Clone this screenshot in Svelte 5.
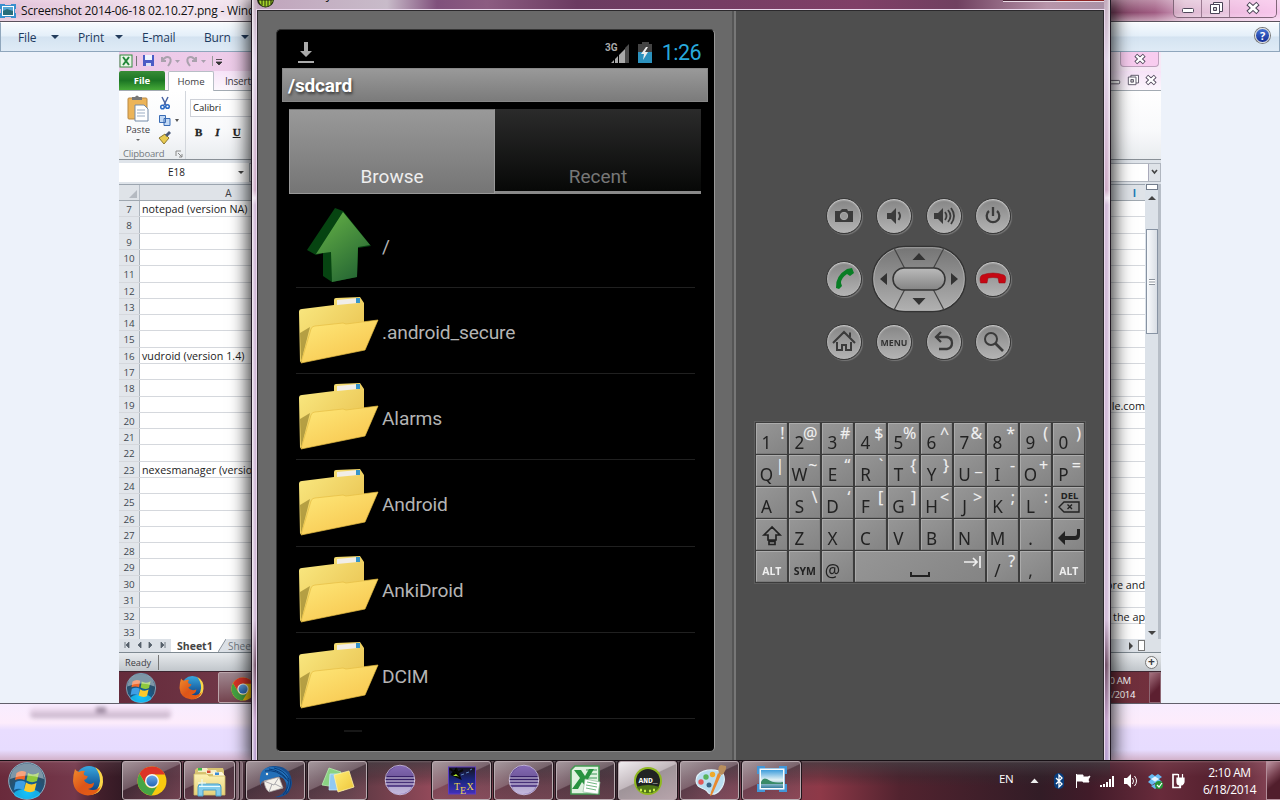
<script>
  const sheetRows = Array.from({ length: 27 }, (_, i) => i + 7);
  const cellText = { 7: 'notepad (version NA)', 16: 'vudroid (version 1.4)', 23: 'nexesmanager (version 2.1)' };
  const farText = { 19: 'le.com', 30: 'ore and', 32: 'the ap' };
  const folders = ['.android_secure', 'Alarms', 'Android', 'AnkiDroid', 'DCIM'];
  const keyRows = [
    ['1!', '2@', '3#', '4$', '5%', '6^', '7&', '8*', '9(', '0)'],
    ['Q|', 'W~', 'E“', 'R`', 'T{', 'Y}', 'U_', 'I-', 'O+', 'P='],
    ['A', 'S\\', 'D‘', 'F[', 'G]', 'H<', 'J>', 'K;', 'L:', 'DEL'],
    ['SHIFT', 'Z', 'X', 'C', 'V', 'B', 'N', 'M', '.', 'ENTER'],
    ['ALT', 'SYM', '@', 'SPACE', '/?', ',', 'ALT']
  ];
  const pad = ['camera', 'voldown', 'volup', 'power', 'call', 'dpad', 'end', 'home', 'menu', 'back', 'search'];
  const tasks = ['thunderbird', 'sticky', 'eclipse0', 'tex', 'eclipse', 'excel', 'and', 'paint', 'photo'];
</script>

{#snippet orb()}
  <circle cx="20" cy="20" r="18.3" fill="url(#orbg)" stroke="#8fb3c6" stroke-width="1" />
  <ellipse cx="20" cy="33" rx="13" ry="5" fill="#18c8ff" opacity=".75" />
  <path d="M9.500 12Q14 8.500 19 11L17.500 19Q13 17 8 19Z" fill="#f0682a" />
  <path d="M21 12Q26 15 32 11.500L30 20Q25 22.500 19.500 19.500Z" fill="#8fc93c" />
  <path d="M7.500 21Q13 18.500 17.500 21L15.500 29Q11 26.500 6 29Z" fill="#3f9fe6" transform="translate(1 0)" />
  <path d="M19 21.500Q24 25 29.500 22L27.500 30Q23 32.500 17 29.500Z" fill="#fcc92c" />
  <path d="M3 18C4 7 12 2.500 20 2.500S36 7 37 18Q20 11 3 18Z" fill="#fff" opacity=".4" />
{/snippet}

{#snippet firefox()}
  <circle cx="21" cy="18" r="13" fill="url(#ffb)" />
  <path d="M27 6Q36 11 35 21Q34 33 22 34Q31 30 32 20Q32 12 27 6Z" fill="#fbd648" />
  <path d="M7 8Q8 10 11 11Q14 9 17 10Q15 12 16 14L20 15.500Q19 18 16 19Q17 21.500 19 22Q23 24 26 21.500Q26 27 20 28Q28 31 33 25Q30 34 20 34.500Q6 33 5 20Q5 14 7 8Z" fill="url(#ffo)" />
{/snippet}

{#snippet chrome()}
  <circle cx="20" cy="20" r="14.500" fill="#f8c910" />
  <path d="M7.500 12.700A14.500 14.500 0 0 1 33 13.500H20A7 7 0 0 0 14 23.500Z" fill="#dc3427" />
  <path d="M7.500 12.700A14.500 14.500 0 0 0 19.500 34.500L26.200 23.500A7 7 0 0 1 13.800 23.500Z" fill="#46a544" />
  <circle cx="20" cy="20" r="7" fill="#f4f5f0" /><circle cx="20" cy="20" r="5.600" fill="url(#chb)" />
{/snippet}

{#snippet icon(n)}
  <svg class="ticon" width="40" height="40" viewBox="0 0 40 40">
    {#if n === 'orb'}{@render orb()}
    {:else if n === 'firefox'}{@render firefox()}
    {:else if n === 'chrome'}{@render chrome()}
    {:else if n === 'explorer'}
      <path d="M5 9L7 7H33L34 10V34H5Z" fill="#d8c473" />
      <path d="M8 7h9l2 4H8z" fill="#f5eec8" /><rect x="8" y="7" width="4" height="2.500" fill="#3fb84a" />
      <path d="M16 9h10l2 4H16z" fill="#f5eec8" /><rect x="17" y="9.500" width="3.500" height="2.500" fill="#d44b30" />
      <path d="M23 11h9l3 4H23z" fill="#fff8dd" /><rect x="25" y="11.500" width="4" height="2.500" fill="#3a8cd8" />
      <path d="M4 13H17L19 15H35V34H4Z" fill="url(#exf)" stroke="#d2bc68" stroke-width=".8" />
      <path d="M8 35V26Q8 23 11 23H28Q31 23 31 26V35H26V29H13V35Z" fill="#83cdec" stroke="#4c9fc8" stroke-width="1" />
      <path d="M9 25.500H30M12 18v8M8 22h8" stroke="#e8fbff" stroke-width="1" />
    {:else if n === 'thunderbird'}
      <path d="M5 14Q9 5 17 5Q27 4 33 11Q39 22 33 31Q28 37 19 36Q28 34 30 27Q31 21 27 17Z" fill="#164f93" />
      <path d="M4 16Q5 7 14 6Q25 5 32 14Q36 22 31 32Q33 20 24 15L7 20Q3 22 6 27Q3 23 4 16Z" fill="#2470b8" />
      <path d="M9 10Q21 8 30 18M13 8Q25 9 32 20M18 7Q28 9 33 18M32 17Q34 26 27 34M34 18Q36 26 30 33" stroke="#093b78" fill="none" stroke-width="1" />
      <path d="M8 20L23 16L27 27L13 31Q9 28 8 20Z" fill="#f4f1ea" stroke="#a9a6a7" stroke-width=".7" />
      <path d="M8 20L18 24L23 16M13 31L16 23M27 27L19 23" stroke="#96949b" fill="none" stroke-width=".8" />
      <circle cx="11" cy="13" r="1.200" fill="#f0ede0" />
    {:else if n === 'sticky'}
      <path d="M11 7L23 11L18 26L4 24Z" fill="#8bd283" stroke="#b7edb0" stroke-width=".8" />
      <path d="M12 13H26V29H11Z" fill="#91c9f1" stroke="#c2e4fb" stroke-width=".8" />
      <path d="M16 14L31 10L36 26L20 31Z" fill="url(#note)" stroke="#fff1a5" stroke-width=".8" />
    {:else if n === 'eclipse' || n === 'eclipse0'}
      <circle cx="20" cy="19" r="14.800" fill="url(#ecl)" stroke="#d5cbe6" stroke-width=".8" />
      <path d="M7 13Q14 3 25 5Q31 8 34 15H7Z" fill="#ac92d2" opacity=".5" />
      <path d="M5.500 17H34.500M5 20H35M5.500 23H34.500" stroke="#ece4f7" stroke-width="1.200" />
      <path d="M8 26Q11 33 19 33Q28 33 32 26Z" fill="#e5dff3" opacity=".65" />
    {:else if n === 'tex'}
      <rect x="6.500" y="6" width="27" height="27" fill="url(#tex)" stroke="#5b3bc4" stroke-width="1" />
      <path d="M9 13L18 17L14 7M15 12L21 9M8 8L14 12" stroke="#090909" stroke-width="2" />
      <path d="M11 15l3-2 3 3-2-1z" fill="#b4f12b" /><path d="M24 12l3-1M28 9l2-1M19 14l3-1" stroke="#5c86c0" stroke-width="1" />
      <text x="12" y="29" class="textex">T</text><text x="18" y="32.500" class="textex">E</text><text x="24.500" y="29" class="textex">X</text>
    {:else if n === 'excel'}
      <path d="M9 5H33V33H5V9Z" fill="#dff2e0" stroke="#439a52" stroke-width="1.600" />
      <path d="M20 9h11M22 13h9M22 17h9" stroke="#8dc49b" stroke-width="2" />
      <path d="M8 9H15L19 15L23 8H28L22 18L27 26H20L16 21L12 28H6L14 17Z" fill="#289340" />
      <path d="M19 18L34 21L32 33L17 31Z" fill="#fff" stroke="#92bc9b" stroke-width=".7" /><path d="M21 21l10 2M20 24l11 2M20 27l10 2" stroke="#72b883" stroke-width="1" />
    {:else if n === 'and'}
      <circle cx="20" cy="20" r="14" fill="#8fb820" /><circle cx="20" cy="20" r="12" fill="#202323" />
      <path d="M8.500 26Q20 22 31.500 26Q28 32 20 32Q12 32 8.500 26Z" fill="#4f7616" />
      <path d="M12 29h2M16 30h2M21 30h2M25 29h2" stroke="#c8ef4a" stroke-width="2.500" />
      <text x="20" y="21.500" class="andtext">AND_</text>
    {:else if n === 'paint'}
      <path d="M6 20C6 10 19 7 29 10C37 13 35 23 30 29C25 35 19 34 17 30C13 26 7 28 6 20Z" fill="#b9ddf0" stroke="#e0f2fa" stroke-width="1.200" />
      <circle cx="11" cy="21" r="2.700" fill="#e2585a" /><circle cx="16" cy="16" r="2.700" fill="#58b55c" /><circle cx="22.500" cy="13.500" r="2.700" fill="#eea92b" /><circle cx="19" cy="24" r="2.500" fill="#3a6688" />
      <path d="M31 14L22 34L20 35L21 31L28 12Z" fill="#e88a30" /><path d="M29 13Q27 5 31 4L36 5Q37 9 32 14Z" fill="#b98e5d" />
    {:else if n === 'photo'}
      <path d="M5 5h8v2h14V5h8v8h-2v10h2v8h-8v-2H13v2H5v-8h2V13H5z" fill="#4296d8" />
      <rect x="7.500" y="7.500" width="25" height="21" fill="#f8fbfc" /><rect x="9" y="9" width="22" height="18" fill="url(#photo)" />
      <path d="M9 21Q11 16 15 18Q22 23 31 21V23H9Z" fill="#398a68" />
    {/if}
  </svg>
{/snippet}

{#snippet folder()}
  <svg width="84" height="72" viewBox="0 0 84 72">
    <path d="M3 15Q3 12 6 12L38 8V3Q38 1 40 1L64 0L68 6V38L4 65Z" fill="url(#fold1)" />
    <path d="M41 3L62 1V6L41 8Z" fill="#f1eee8" /><path d="M60 1h4v5h-4z" fill="#3695c9" />
    <path d="M4 36L14 30L5 65Z" fill="#9a8630" opacity=".7" />
    <path d="M5 66L15 32Q16 29 19 29L47 26L50 27L82 23L69 53Z" fill="url(#fold2)" stroke="#e5bd43" stroke-width=".7" />
  </svg>
{/snippet}

{#snippet wctl(kind)}
  <svg width="20" height="16" viewBox="0 0 20 16" class="wctl">
    {#if kind === 'min'}<rect x="4.500" y="8.500" width="11" height="4" rx="1" fill="#fff" stroke="#4f485a" />
    {:else if kind === 'max'}<path d="M7.500 2.500h9v9h-9z" fill="#fff" stroke="#4a4457" /><path d="M4.500 4.500h9v9h-9z" fill="#fff" stroke="#4a4457" /><path d="M7.500 7.500h3v3h-3z" fill="#ccc" stroke="#4a4457" />
    {:else}<path d="M5 3.500L10 8L15 3.500M5 12.500L10 8L15 12.500" stroke="#4b4356" stroke-width="4.800" fill="none" /><path d="M5.700 4L10 8L14.300 4M5.700 12L10 8L14.300 12" stroke="#fff" stroke-width="2.800" fill="none" />{/if}
  </svg>
{/snippet}

{#snippet padIcon(n)}
  <svg width="34" height="34" viewBox="0 0 34 34" fill="none" stroke="#3b3b3b" stroke-width="2">
    {#if n === 'camera'}<path d="M8 12h5l2-2h5l1 2h5v11H8z" fill="#3b3b3b" stroke="none" /><circle cx="17" cy="17" r="3.700" fill="#999" stroke="#aaa" stroke-width="1" />
    {:else if n === 'voldown'}<path d="M10 14h4l5-5v16l-5-5h-4z" fill="#3b3b3b" stroke="none" /><path d="M21.500 13Q24.500 17 21.500 21" />
    {:else if n === 'volup'}<path d="M7 14h4l5-5v16l-5-5H7z" fill="#3b3b3b" stroke="none" /><path d="M18 13Q21 17 18 21M21 11Q26 17 21 23M24 9Q30 17 24 25" stroke-width="1.800" />
    {:else if n === 'power'}<path d="M13 12A6.300 6.300 0 1 0 21 12M17 8V17" stroke-width="2.300" />
    {:else if n === 'call'}<path d="M9 26Q8 14 20 7L25 6L27 11L23 14L20 12Q14 16 14 21L15 24L12 27Z" fill="#087d25" stroke="none" />
    {:else if n === 'end'}<path d="M4.500 21Q3 15 6 13Q17 9 28 13Q31 15 29 21H23L22 16Q17 15 12 16L11 21Z" fill="#c50713" stroke="#970b10" stroke-width=".5" />
    {:else if n === 'home'}<path d="M6 18L17 7L28 18M10 17V25H15V20H19V25H24V17M23 12V7.500" />
    {:else if n === 'back'}<path d="M14 7L9 12L14 17M10 12H20Q25 13 25 18T20 24H12" stroke-width="2.300" />
    {:else if n === 'search'}<circle cx="15" cy="14" r="6" /><path d="M19 18L27 26" stroke-width="2.700" />{/if}
  </svg>
{/snippet}

<svg width="0" height="0" class="defs"><defs>
  <radialGradient id="orbg" cx=".5" cy=".8"><stop offset="0" stop-color="#0eb3f4" /><stop offset=".55" stop-color="#125b91" /><stop offset="1" stop-color="#29506d" /></radialGradient>
  <linearGradient id="ffb" x1="0" y1="0" x2="0" y2="1"><stop offset="0" stop-color="#38a8df" /><stop offset="1" stop-color="#093c83" /></linearGradient>
  <linearGradient id="ffo" x1="0" y1="0" x2="1" y2="1"><stop offset="0" stop-color="#ef8b2c" /><stop offset=".5" stop-color="#dd5519" /><stop offset="1" stop-color="#e86012" /></linearGradient>
  <linearGradient id="chb" x1="0" y1="0" x2="0" y2="1"><stop offset="0" stop-color="#6aa9e7" /><stop offset="1" stop-color="#2465b5" /></linearGradient>
  <linearGradient id="exf" x1="0" y1="0" x2="0" y2="1"><stop offset="0" stop-color="#fcf1b2" /><stop offset="1" stop-color="#e6d17b" /></linearGradient>
  <linearGradient id="note" x1="0" y1="0" x2="1" y2="1"><stop offset="0" stop-color="#ffed73" /><stop offset="1" stop-color="#eec53b" /></linearGradient>
  <linearGradient id="ecl" x1="0" y1="0" x2="0" y2="1"><stop offset="0" stop-color="#60449a" /><stop offset=".45" stop-color="#301a60" /><stop offset="1" stop-color="#8d77bf" /></linearGradient>
  <linearGradient id="tex" x1="0" y1="0" x2="0" y2="1"><stop offset="0" stop-color="#17131c" /><stop offset=".5" stop-color="#1a2780" /><stop offset="1" stop-color="#4231bc" /></linearGradient>
  <linearGradient id="photo" x1="0" y1="0" x2="0" y2="1"><stop offset="0" stop-color="#3e9ddc" /><stop offset=".55" stop-color="#e3f1f4" /><stop offset="1" stop-color="#347e9e" /></linearGradient>
  <linearGradient id="fold1" x1="0" y1="0" x2="1" y2="1"><stop offset="0" stop-color="#faea83" /><stop offset="1" stop-color="#e6bb47" /></linearGradient>
  <linearGradient id="fold2" x1="0" y1="0" x2=".8" y2="1"><stop offset="0" stop-color="#fee97b" /><stop offset="1" stop-color="#f7c54d" /></linearGradient>
  <linearGradient id="arrow" x1="0" y1="0" x2=".6" y2="1"><stop offset="0" stop-color="#68b447" /><stop offset="1" stop-color="#286a34" /></linearGradient>
  <linearGradient id="dpadg" x1="0" y1="0" x2="0" y2="1"><stop offset="0" stop-color="#747474" /><stop offset="1" stop-color="#b1b1b1" /></linearGradient>
  <linearGradient id="pillg" x1="0" y1="0" x2="0" y2="1"><stop offset="0" stop-color="#bbb" /><stop offset="1" stop-color="#848484" /></linearGradient>
</defs></svg>

<div class="desktop">
  <div class="behind"><div class="blurbar"><i></i></div></div>

  <section class="viewer">
    <header class="vtitle">
      <svg width="16" height="14" viewBox="0 0 16 14"><path d="M0 0h5v1h6V0h5v5h-1v4h1v5h-5v-1H5v1H0V9h1V5H0z" fill="#398fcd" /><path d="M2 2h12v10H2z" fill="#fff" /><path d="M3 3h10v8H3z" fill="#55a7d5" /><path d="M3 7l4-2 6 2v4H3z" fill="#296d7a" /></svg>
      <span>Screenshot 2014-06-18 02.10.27.png - Windows Photo Viewer</span>
      <div class="wbtns"><i>{@render wctl('min')}</i><i>{@render wctl('max')}</i><i class="x">{@render wctl('x')}</i></div>
    </header>
    <nav class="vmenu">
      <span class="m1">File<b></b></span><span class="m2">Print<b></b></span><span class="m3">E-mail</span><span class="m4">Burn<b></b></span><span class="help">?</span>
    </nav>
    <div class="vbody">
      <div class="excel">
        <div class="xtitle">
          <svg width="112" height="18" viewBox="0 0 112 18"><rect x="1" y="3" width="12" height="12" fill="#e9f5e7" stroke="#338b3e" /><path d="M4 5l6 8M10 5l-6 8" stroke="#22873a" stroke-width="2" /><path d="M17.500 4v10" stroke="#777" /><path d="M24 3h11v11H24z" fill="#4b5cc5" /><path d="M26 3h7v5h-7z" fill="#eef3ff" /><path d="M27 11h5v3h-5z" fill="#dce2f5" /><path d="M43 5v4h4M43 9q4-6 8-3q2 3-2 8" fill="none" stroke="#aaa1ad" stroke-width="2" /><path d="M56 8h5l-2.500 3z" fill="#a99fad" /><path d="M77 5v4h-4M77 9q-4-6-8-3q-2 3 2 8" fill="none" stroke="#aaa1ad" stroke-width="2" /><path d="M82 8h5l-2.500 3z" fill="#a99fad" /><path d="M93.500 4v10" stroke="#999" /><path d="M97 7.500h6M97 10h6l-3 3z" stroke="#333" fill="#333" stroke-width=".8" /></svg>
          <div class="xwin">{@render wctl('x')}</div>
        </div>
        <div class="xtabs"><b>File</b><span class="home">Home</span><span class="insert">Insert</span><span class="docbtns">{@render wctl('min')}{@render wctl('max')}{@render wctl('x')}</span></div>
        <div class="ribbon">
          <div class="clip">
            <div class="cliprow">
              <div class="paste"><svg width="24" height="28" viewBox="0 0 24 28"><rect x="2" y="3" width="19" height="21" rx="1" fill="#ecb459" stroke="#b98842" /><path d="M6 5V2h3q2-3 4 0h3v3z" fill="#777" /><path d="M9 10h9l4 4v12H9z" fill="#fff" stroke="#748ba8" /><path d="M11 15h8M11 18h8M11 21h8" stroke="#9badc4" /></svg><span>Paste</span><b></b></div>
              <svg width="24" height="54" viewBox="0 0 24 54"><path d="M5 2l4 8M11 2L7 10" stroke="#4964a4" stroke-width="1.500" /><circle cx="5.500" cy="12" r="1.800" fill="none" stroke="#2868c4" stroke-width="1.500" /><circle cx="10.500" cy="11.500" r="1.800" fill="none" stroke="#2868c4" stroke-width="1.500" /><path d="M2.500 20.500h6v7h-6zM7 23.500h6v7H7z" fill="#c2d9f5" stroke="#396bb4" /><path d="M18 24h4l-2 3z" fill="#555" /><path d="M2 43l6-4 4 4-5 6z" fill="#e9cb51" stroke="#8c7830" /><path d="M8 40l4-4 2 2-4 4z" fill="#4d5b79" /></svg>
            </div>
            <div class="clabel">Clipboard <svg width="8" height="8" viewBox="0 0 8 8"><path d="M1 6V1h5M3 3l4 4M7 4v3H4" fill="none" stroke="#888" /></svg></div>
          </div>
          <div class="fontg"><div class="fbox">Calibri</div><div class="biu"><b>B</b><i>I</i><u>U</u><em></em></div></div>
        </div>
        <div class="fbar"><span>E18</span><b></b><div class="finput"><i><svg width="7" height="6" viewBox="0 0 7 6"><path d="M1 1l2.500 3L6 1" fill="none" stroke="#444" stroke-width="1.600" /></svg></i></div></div>
        <div class="sheetwrap">
          <div class="sheet">
            <div class="colhead"><span class="corner"><i></i></span><span class="ca">A</span><span class="ci">I</span></div>
            {#each sheetRows as r}
              <div class="xrow"><span class="rn">{r}</span><span class="cell">{cellText[r] ?? ''}</span><span class="far">{farText[r] ?? ''}</span></div>
            {/each}
          </div>
          <div class="vscroll"><i class="split"></i><b class="up"></b><div class="thumb"><i></i></div><b class="down"></b></div>
        </div>
        <div class="stabs"><svg width="52" height="12" viewBox="0 0 52 12"><path d="M6 3v6M10 3v6L7 6zM22 3v6l-3-3zM30 3v6l3-3zM42 3v6l3-3zM46 3v6" stroke="#555f6a" fill="#555f6a" stroke-width=".8" /></svg><b>Sheet1</b><svg width="8" height="13" viewBox="0 0 8 13"><path d="M0 0h8L0 13z" fill="#fff" /><path d="M8 0L0 13" stroke="#8a929b" /></svg><span>Sheet2</span><div class="hend"><i></i><em></em></div></div>
        <div class="xstatus"><span>Ready</span><i>+</i></div>
        <div class="minibar">
          <svg width="34" height="32" viewBox="0 0 40 40">{@render orb()}</svg><svg width="33" height="32" viewBox="0 0 40 40" class="mff">{@render firefox()}</svg><div class="mchrome"><svg width="32" height="32" viewBox="0 0 40 40">{@render chrome()}</svg></div>
          <div class="mclock"><span>2:10 AM</span><span>6/18/2014</span></div><i class="mshow"></i>
        </div>
      </div>
    </div>
  </section>

  <section class="emu">
    <header class="etitle"><svg width="18" height="10" viewBox="0 5.500 18 10"><circle cx="8.500" cy="4.500" r="8.500" fill="#1c280b" /><path d="M2 6h14Q14 12 8.500 12T2 6z" fill="#a5d329" /><path d="M5 5v6M8 5v7M11 5v7M14 5v5" stroke="#1d290c" /></svg><span>5554:my</span><i class="ectl"></i></header>
    <div class="client">
      <div class="left">
        <div class="phone">
          <div class="pstatus">
            <svg class="dl" width="16" height="22" viewBox="0 0 16 22"><path d="M6 0h4v9h4l-6 6-6-6h4zM0 19h16v2H0z" fill="#aaa" /></svg>
            <svg width="50" height="24" viewBox="0 0 50 24"><text x="0" y="10" class="g3">3G</text><path d="M6 22L9 19V22zM10 18l3-3v7h-3zM14 14l3-3v11h-3zM16 12l4-4v14h-4z" fill="#aaa" /><path d="M20 7l4-4v19h-4z" fill="#4c4c4c" /><path d="M33 3h4V1h7v2h3v19H33z" fill="#444" /><path d="M33 11h14v11H33z" fill="#2c91bd" /><path d="M41 6l-5 7h3l-1 6 5-8h-3l3-5z" fill="#eee" /></svg>
            <time>1:26</time>
          </div>
          <div class="path">/sdcard</div>
          <div class="tabs"><div class="tab on">Browse</div><div class="tab">Recent</div></div>
          <div class="list">
            <div class="item"><svg class="uparrow" width="82" height="80" viewBox="0 0 82 80"><path d="M37 3L45 6L73 41L60 43L59 72L34 77L25 71V48L18 50L9 45Z" fill="#064411" /><path d="M45 7L72 40L60 42L59 72L34 77L33 47L18 49Z" fill="url(#arrow)" /></svg><span>/</span></div>
            {#each folders as f}<div class="item">{@render folder()}<span>{f}</span></div>{/each}
            <div class="peek"></div>
          </div>
        </div>
      </div>
      <div class="right">
        <div class="pad">
          {#each pad as p}
            {#if p === 'dpad'}
              <svg class="dpad" width="96" height="68" viewBox="0 0 96 68"><rect x="1.500" y="1.500" width="93" height="65" rx="32.500" fill="url(#dpadg)" stroke="#333" stroke-width="1.500" /><rect x="2.700" y="2.700" width="90.600" height="62.600" rx="31" fill="none" stroke="#bbb" stroke-width=".7" /><path d="M23 3L34 24M73 3L62 24M23 65L34 44M73 65L62 44" stroke="#444" stroke-width="1.200" /><rect x="22" y="23" width="52" height="22" rx="11" fill="url(#pillg)" stroke="#343434" stroke-width="1.500" /><path d="M41.500 15L48 8l6.500 7zM41.500 53l6.500 7 6.500-7zM16 28v12l-7-6zM80 28v12l7-6z" fill="#333" /></svg>
            {:else}
              <div class="rb">{#if p === 'menu'}<span>MENU</span>{:else}{@render padIcon(p)}{/if}</div>
            {/if}
          {/each}
        </div>
        <div class="keys">
          {#each keyRows.flat() as k}
            <div class="key" class:space={k === 'SPACE'}>
              {#if k === 'ALT'}<span class="alt">ALT</span>
              {:else if k === 'SYM'}<span class="alt sym">SYM</span>
              {:else if k === 'DEL'}<svg width="32" height="31" viewBox="0 0 32 31"><text x="16.500" y="12" class="del">DEL</text><path d="M11 15h15v10H11l-5-5zM14.500 17.500l4.500 4.500M19 17.500l-4.500 4.500" fill="none" stroke="#222" stroke-width="1.400" /></svg>
              {:else if k === 'SHIFT'}<svg width="32" height="31" viewBox="0 0 32 31"><path d="M16 8l-8 8h4v5h8v-5h4zM13 22.500h6v3h-6z" fill="none" stroke="#222" stroke-width="1.700" /></svg>
              {:else if k === 'ENTER'}<svg width="32" height="31" viewBox="0 0 32 31"><path d="M5 19l7-7v5h10q2 0 2-3v-4h3v6q0 5-5 5H12v5z" fill="#222" /></svg>
              {:else if k === 'SPACE'}<svg width="131" height="31" viewBox="0 0 131 31"><path d="M56 21v4h18v-4" fill="none" stroke="#222" stroke-width="2" /><path d="M109 11h13M118 7l4 4-4 4M125 5v12" fill="none" stroke="#eee" stroke-width="1.700" /></svg>
              {:else}<span class="main">{k[0]}</span>{#if k[1]}<span class="sup">{k[1]}</span>{/if}{/if}
            </div>
          {/each}
        </div>
      </div>
    </div>
  </section>

  <footer class="taskbar">
    <div class="t free orb">{@render icon('orb')}</div>
    <div class="t free ff">{@render icon('firefox')}</div>
    <div class="t">{@render icon('chrome')}</div>
    <div class="t expl">{@render icon('explorer')}</div><i class="stack"></i><i class="stack s2"></i>
    {#each tasks as n}<div class="t" class:free={n === 'eclipse0'} class:active={n === 'and'}>{@render icon(n)}</div>{/each}
    <div class="tray">
      <span class="en">EN</span>
      <svg width="160" height="24" viewBox="1028 0 160 24"><path d="M1030.500 14h8l-4-4.500z" fill="#eee" /><rect x="1054" y="4" width="10" height="16" rx="5" fill="#083d7d" /><path d="M1056 9l6 6-3 3V6l3 3-6 6" fill="none" stroke="#fff" stroke-width="1.300" /><path d="M1076.500 5v14M1077 6h6v6h-6zM1083 8h5l2-1-2 4 1 2h-6z" fill="#fff" stroke="#fff" /><path d="M1100 18v-2h2v2zM1103 18v-3h2v3zM1106 18v-5h2v5zM1109 18v-8h2v8zM1112 18V7h2v11z" fill="#fff" /><path d="M1124 9h3l4-4v14l-4-4h-3z" fill="#fff" /><path d="M1132.500 9q2 3 0 6M1134.500 7q4 5 0 10" fill="none" stroke="#fff" /><path d="M1148 8l4-3 3 2 3-2 4 3-3 2 3 3-4 3-3-2-3 2-4-3 3-3zM1151 17l4-2 4 2-4 3z" fill="#66baf1" /><path d="M1155 7.500l-4 2.500 4 2.700 4-2.700z" fill="#e6f5ff" /><circle cx="1159" cy="16" r="4" fill="#259437" /><path d="M1157 16l2 2 3-4" stroke="#fff" fill="none" stroke-width="1.200" /><path d="M1178 5.500h-5v13h7v-3" stroke="#fff" fill="none" stroke-width="1.700" /><path d="M1177 9h7v4q-1 3-3 3h-1q-3 0-3-3zM1178.500 5v4M1182.500 5v4M1180.500 15v4" stroke="#fff" fill="#fff" stroke-width="1.200" /></svg>
      <div class="clock"><span>2:10 AM</span><span>6/18/2014</span></div>
      <i class="show"></i>
    </div>
  </footer>
</div>

<style>
  :global(body) { overflow: hidden; }
  * { box-sizing: border-box; }
  svg { display: block; flex: none; }
  .defs { position: absolute; }
  .desktop { position: relative; width: 1280px; height: 800px; overflow: hidden; background: #e9ddff; font-family: "Open Sans", "Noto Sans", sans-serif; font-size: 12px; }
  .behind { position: absolute; left: 0; top: 703px; width: 1280px; height: 57px; padding-top: 4px; background: linear-gradient(#f8edff 0, #fdecfc 20px, #e9ddff 27px, #e7dcff 47px, #d2b2ca 57px); }
  .blurbar { width: 141px; height: 11px; margin-left: 30px; display: flex; justify-content: center; border-radius: 4px; background: linear-gradient(#efdcf1 20%, #bfacc1); filter: blur(2px); }
  .blurbar i { width: 10px; height: 6px; background: #9e8ba2; }
  .viewer { position: absolute; left: 0; top: 0; width: 1280px; height: 704px; display: flex; flex-direction: column; background: #edf2fa; border-bottom: 1px solid #62606b; }
  .vtitle { height: 22px; display: flex; align-items: center; color: #111; background: linear-gradient(#ffffff50, #ffffff00 60%, #ffffff70), linear-gradient(90deg, #dbb2cf, #f0deeb 180px, #d9c0d4 1050px, #7f4262 1115px, #a15d83 1155px, #d3a2c2 1185px, #f4c6ea); border-bottom: 1px solid #59515c; }
  .vtitle > svg { margin-right: 5px; }
  .vtitle > span { white-space: pre; letter-spacing: -0.2px; text-shadow: 0 0 4px #fff; }
  .wbtns { display: flex; margin-left: auto; margin-right: 3px; height: 18px; margin-bottom: 4px; border: 1px solid #816679; border-top: 0; border-radius: 0 0 5px 5px; overflow: hidden; }
  .wbtns i { width: 28px; display: flex; align-items: center; justify-content: center; border-right: 1px solid #9b7b92; background: #ffffff40; }
  .wbtns i.x { width: 46px; border: 0; background: #ffc9f066; }
  .vmenu { height: 30px; display: flex; align-items: center; color: #1e3a60; background: linear-gradient(#f7fbfe, #e4eff9 46%, #d4e3f1 50%, #dfebf6); border: 1px solid #8fa6bc; border-top-color: #fff; padding-left: 17px; }
  .vmenu span { display: flex; align-items: center; white-space: pre; letter-spacing: -0.15px; }
  .vmenu b { border: 4px solid transparent; border-top-color: #233c5c; border-bottom: 0; }
  .m1 { width: 60px; } .m1 b { margin-left: 15px; } .m2 { width: 64px; } .m2 b { margin-left: 11px; } .m3 { width: 62px; } .m4 b { margin-left: 10px; }
  .vmenu .help { margin-left: auto; margin-right: 9px; width: 15px; height: 15px; margin-bottom: 4px; justify-content: center; border-radius: 50%; background: linear-gradient(#4472d2, #142f98); border: 1px solid #ddd; box-shadow: 0 0 0 1px #777; color: #fff; font-weight: 700; font-size: 11px; }
  .vbody { flex: 1; padding-left: 119px; }
  .excel { width: 1042px; height: 651px; display: flex; flex-direction: column; color: #3d3d43; font-size: 10px; background: #dfe4ea; overflow: hidden; }
  .xtitle { height: 19px; display: flex; justify-content: space-between; background: linear-gradient(90deg, #edc9e8, #f7e8f6); }
  .xwin { width: 39px; display: flex; height: 15px; border: 1px solid #bda1bc; border-top: 0; border-radius: 0 0 4px 4px; margin-right: 2px; background: #f8ccef; justify-content: center; align-items: center; }
  .xwin :global(svg), .docbtns :global(svg) { transform: scale(.85); }
  .xtabs { height: 20px; display: flex; background: linear-gradient(#f7e3f8, #fcf7fd); border-bottom: 1px solid #a3abb3; line-height: 20px; }
  .xtabs > b { width: 46px; text-align: center; color: #fff; background: linear-gradient(#388c37, #1c7524 50%, #46aa38); border-radius: 2px 2px 0 0; margin-right: 3px; font: 700 9.5px/20px "Noto Sans", sans-serif; transform-origin: left; }
  .home { width: 46px; height: 20px; text-align: center; background: #fff; border: 1px solid #b8bec6; border-bottom: 0; border-radius: 2px 2px 0 0; font-size: 9.6px; }
  .insert { padding-left: 11px; letter-spacing: -.2px; }
  .docbtns { margin-left: auto; display: flex; align-items: center; }
  .docbtns :global(svg) { margin-left: -2px; }
  .ribbon { height: 70px; display: flex; background: linear-gradient(#fff, #f8f9fb 60%, #e9ecef); border-bottom: 1px solid #899097; }
  .clip { width: 67px; border-right: 1px solid #d2d6dc; padding-top: 4px; }
  .cliprow { display: flex; height: 55px; }
  .paste { width: 38px; display: flex; flex-direction: column; align-items: center; line-height: 13px; white-space: pre; font-size: 9.5px; }
  .paste b { border: 2.5px solid transparent; border-top-color: #666; margin-top: 3px; border-bottom: 0; }
  .clabel { display: flex; gap: 8px; align-items: center; padding-left: 4px; color: #747980; font-size: 9.5px; line-height: 7px; letter-spacing: -.2px; white-space: pre; }
  .fontg { padding: 8px 0 0 4px; }
  .fbox { width: 130px; height: 18px; border: 1px solid #ced1d8; background: #fff; color: #222; line-height: 16px; padding-left: 2px; font-size: 9.5px; }
  .biu { display: flex; gap: 13px; padding: 9px 0 0 5px; font: 700 11px "Liberation Serif", serif; color: #222; -webkit-text-stroke: .3px #222; }
  .fbar { height: 24px; background: #dfe4ea; padding: 3px 0; display: flex; align-items: center; color: #222; }
  .fbar > span { width: 115px; height: 19px; background: #fff; line-height: 19px; text-align: center; }
  .fbar > b { width: 15px; height: 19px; background: #fff; display: flex; align-items: center; }
  .fbar > b::after { content: ''; border: 3px solid transparent; border-top-color: #444; border-bottom: 0; margin-left: 4px; }
  .finput { flex: 1; height: 19px; background: #fff; border: 1px solid #b0b6bf; display: flex; justify-content: flex-end; }
  .finput i { width: 12px; background: #dfe3e8; border-left: 1px solid #aab; display: flex; align-items: center; justify-content: center; }
  .sheetwrap { height: 455px; display: flex; }
  .sheet { width: 1026px; background: #fff; border-top: 1px solid #9ca5af; overflow: hidden; }
  .colhead { height: 16px; display: flex; background: #dfe3e8; border-bottom: 1px solid #a0a8b0; line-height: 17px; }
  .corner { width: 21px; border-right: 1px solid #b7bec7; display: flex; justify-content: flex-end; align-items: flex-end; padding: 2px; }
  .corner i { border: 4px solid transparent; border-right-color: #b5bac1; border-bottom-color: #b5bac1; }
  .ca { width: 177px; text-align: center; } .ci { margin-left: auto; padding-right: 9px; color: #1978b5; font-weight: 700; }
  .xrow { height: 16.29px; display: flex; border-bottom: 1px solid #d5d8dd; line-height: 17px; color: #1b1b1b; white-space: pre; }
  .rn { width: 21px; background: #e2e6eb; border-right: 1px solid #adb5bd; text-align: center; color: #40464e; font-size: 9.8px; }
  .cell { padding-left: 2px; width: 400px; font-size: 10.7px; letter-spacing: .03px; }
  .far { margin-left: auto; font-size: 10.8px; }
  .vscroll { width: 16px; background: #dce2e9; border-right: 3px solid #b7bec7; display: flex; flex-direction: column; align-items: center; }
  .split { width: 12px; height: 6px; border: 1px solid #737d8c; background: #fff; }
  .up { border: 4px solid transparent; border-bottom-color: #444; border-top: 0; margin-top: 6px; }
  .thumb { margin-top: 29px; width: 12px; height: 105px; border: 1px solid #8793a3; background: linear-gradient(90deg, #f8fafc, #d9dee5); display: flex; align-items: center; justify-content: center; }
  .thumb i { width: 6px; height: 6px; border: 1px solid #8c939c; border-width: 1px 0; background: linear-gradient(#fff 1px, #8c939c 2px, #fff 3px); }
  .down { border: 4px solid transparent; border-top-color: #444; border-bottom: 0; margin-top: auto; margin-bottom: 4px; }
  .stabs { height: 13px; display: flex; background: #dce1e7; line-height: 14px; white-space: pre; }
  .stabs > b { background: #fff; width: 47px; padding-left: 6px; font-size: 10.5px; color: #444; }
  .stabs > span { padding-left: 2px; color: #727982; }
  .hend { margin-left: auto; display: flex; align-items: center; gap: 5px; padding-right: 16px; }
  .hend i { border: 4px solid transparent; border-left-color: #444; border-right: 0; } .hend em { width: 7px; height: 11px; border: 1px solid #777; background: #fff; }
  .xstatus { height: 19px; display: flex; justify-content: space-between; align-items: center; border-top: 1px solid #7e8991; background: linear-gradient(#e8ebee, #c1c6cb); padding: 0 3px 0 6px; }
  .xstatus span { border-right: 1px solid #777; width: 34px; height: 15px; font-size: 9.2px; line-height: 15px; }
  .xstatus i { width: 13px; height: 13px; border: 1px solid #777; background: #f4f4f4; border-radius: 50%; text-align: center; line-height: 10px; font-size: 12px; font-weight: 700; font-style: normal; }
  .minibar { height: 32px; display: flex; align-items: center; background: linear-gradient(90deg, #652b3b, #713848 120px, #422932 600px, #73303d); padding-left: 5px; border-top: 1px solid #3e2530; }
  .mff { margin-left: 17px; } .mchrome { margin-left: 10px; width: 58px; height: 31px; padding-left: 8px; border: 1px solid #bca5ab; border-radius: 2px; background: linear-gradient(#a08890, #74444f); }
  .mclock { margin-left: auto; color: #fff; font-size: 9.6px; line-height: 14px; display: flex; flex-direction: column; align-items: center; letter-spacing: -.35px; width: 50px; margin-right: 10px; }
  .mshow { width: 12px; height: 31px; border: 1px solid #8e6773; background: linear-gradient(135deg, #a57380, #5c1f30 60%); }

  .emu { position: absolute; left: 251px; top: 0; width: 860px; height: 760px; border: 1px solid #211923; border-top: 0; border-bottom: 0; padding: 0 6px 0 5px; box-shadow: 0 2px 17px 3px #000000d0; background: linear-gradient(90deg, #ffffffc0 0, transparent 3px, transparent 855px, #fff9 858px), linear-gradient(#c5aebf, #e0d4e8 60px, #cfadc8 190px, #ece2ed 198px, #d2bbd8 205px, #d3bdd9 620px, #78586f 665px, #c4a3cc 720px, #b7a0cf); }
  .etitle { height: 10px; display: flex; gap: 9px; overflow: hidden; background: linear-gradient(90deg, #c0a4bc, #c8bbc9 130px, #80507c 180px, #8c5c81 230px, #6b3b61 320px, #803f67 600px, #704060 700px, #b794a9 790px, #aa91a6); }
  .etitle span { line-height: 14px; margin-top: -12px; font-size: 12px; color: #111; white-space: pre; }
  .ectl { margin-left: auto; width: 101px; height: 2px; border-bottom: 1px solid #eadbe6; background: linear-gradient(90deg, #4b2437 52%, #8e2525 54%); }
  .client { height: 750px; display: flex; border: 1px solid #2b292c; border-bottom: 0; overflow: hidden; background: #4f4f4f; box-shadow: 0 0 0 1px #ead8ec; }
  .left { width: 478px; background: #696969; border-right: 2px solid #777; padding: 18px 0 0 18px; box-shadow: inset -2px 0 #555; }
  .phone { width: 439px; height: 723px; background: #000; border: 1px solid #343434; border-right-color: #999; border-bottom-color: #888; border-radius: 5px; font-family: Roboto, sans-serif; overflow: hidden; padding: 0 6px 0 5px; }
  .pstatus { height: 38px; display: flex; align-items: center; padding-right: 7px; padding-top: 7px; }
  .dl { margin: 0 auto 0 16px; }
  .g3 { font: 700 10px Roboto, sans-serif; fill: #aaa; }
  .pstatus time { color: #28a9dc; font-size: 21.5px; margin-left: 7px; letter-spacing: -.55px; line-height: 24px; }
  .path { height: 34px; background: linear-gradient(#999, #7b7b7b); border: 1px solid #888; color: #fff; font-weight: 700; font-size: 19px; line-height: 33px; padding-left: 5px; text-shadow: 1px 2px 3px #333; letter-spacing: -.15px; }
  .tabs { display: flex; margin: 7px 7px 0; height: 85px; font-size: 19px; line-height: 20px; }
  .tab { flex: 1; display: flex; align-items: flex-end; justify-content: center; padding-bottom: 4px; color: #777; background: linear-gradient(#2b2b2b, #070807); border-bottom: 3px solid #898989; }
  .tab.on { flex: none; width: 206px; color: #eee; background: linear-gradient(#999, #757575); border: 1px solid #999; border-top-color: #777; padding-bottom: 6px; }
  .list { margin: 8px 13px 0 14px; }
  .item { height: 86.15px; border-bottom: 1px solid #202020; display: flex; align-items: center; padding-top: 3px; color: #b4b4b4; font-size: 19.2px; letter-spacing: -.15px; white-space: pre; }
  .item svg { margin-top: 2px; margin-right: 2px; }
  .item .uparrow { margin-left: 2px; margin-top: -2px; }
  .peek { width: 18px; height: 2px; background: #171717; margin: 11px 0 0 48px; }
  .right { flex: 1; padding: 187px 0 0 19px; background: #4e4e4e; }
  .pad { width: 186px; margin-left: 71px; display: grid; grid-template-columns: repeat(4, 36px); column-gap: 13.8px; row-gap: 27px; }
  .rb { width: 36px; height: 36px; border: 1px solid #373737; border-radius: 50%; background: linear-gradient(#858585, #b4b4b4); box-shadow: inset 0 1px 2px #ddd, 1px 1px 1px #777; }
  .rb span { display: flex; align-items: center; justify-content: center; height: 100%; font: 700 9.5px "Noto Sans", sans-serif; color: #333; transform: scaleX(.92); }
  .dpad { grid-column: span 2; margin: -16px 0 -16px -5px; }
  .keys { margin-top: 62px; width: 330px; height: 161px; display: grid; grid-template-columns: repeat(10, 1fr); grid-template-rows: repeat(5, 1fr); gap: 1.5px; padding: 1px; background: #3c3c3c; outline: 1px solid #5d5d5d; }
  .key { min-width: 0; min-height: 0; background: linear-gradient(145deg, #969696, #848484); border: 1px solid; border-color: #adadad #858585 #7a7a7a #aaa; display: flex; justify-content: space-between; font: 18px/20px "Noto Sans", sans-serif; color: #222; }
  .key svg { margin: -1px 0 0 -1px; }
  .key.space { grid-column: span 4; }
  .main { width: 19px; display: flex; justify-content: center; align-items: flex-end; line-height: 22px; flex: none; transform: scaleX(.95); }
  .sup { color: #eee; font-size: 16px; line-height: 18px; margin: 0 2px 0 -10px; text-shadow: 0 0 1px #aaa; }
  .alt { width: 100%; text-align: center; align-self: flex-end; font: 700 11px/20px "Noto Sans", sans-serif; color: #eee; transform: scaleX(.95); } .sym { color: #222; font-size: 11px; }
  .del { font: 700 9.5px "Noto Sans", sans-serif; text-anchor: middle; fill: #222; }

  .taskbar { position: absolute; left: 0; top: 760px; width: 1280px; height: 40px; display: flex; align-items: flex-start; border-top: 1px solid #171015; background: linear-gradient(#ffffff38 0, #ffffff10 2px, transparent 16px), linear-gradient(#322a30d0 0, #322a3000 65%) 250px 0 / 860px 100% no-repeat, linear-gradient(90deg, #692a3b 0, #74384b 75px, #421f2b 100px, #351a25 120px, #5c303f 180px, #402732 242px, #5a3842 350px, #984b5c 440px, #6c3a48 520px, #3c2932 630px, #754052 720px, #8e3948 820px, #52232f 900px, #321c26 1040px, #411b29 1090px, #682b3b 1160px, #54202e 1220px, #8e4a5c 1280px); }
  .t { width: 59px; height: 39px; margin-right: 3px; border: 1px solid #b9aab0; border-radius: 3px; background: linear-gradient(155deg, #c8bbc0b8 0, #8e7a83a8 44%, #5845505c 46%, #94606e60); box-shadow: 0 0 0 1px #20151b; display: flex; align-items: center; justify-content: center; flex: none; }
  .t.free { background: none; border-color: transparent; box-shadow: none; }
  .t.orb { width: 54px; margin-right: 5px; } .t.ff { width: 60px; padding-right: 3px; }
  .t.expl { width: 51px; margin-right: 0; }
  .stack { width: 4px; height: 39px; border: 1px solid #917b84; border-left-color: #281b20; background: #806772; border-radius: 0 3px 3px 0; } .s2 { margin-right: 3px; }
  .t.active { background: linear-gradient(155deg, #f0ecef, #c2b8bd 44%, #9f9499 46%, #b7a4ab); }
  .textex { font: 10px "Liberation Serif", serif; fill: #eed64c; }
  .andtext { font: 700 8px "Liberation Mono", monospace; fill: #fff; text-anchor: middle; }
  .tray { margin-left: auto; height: 39px; display: flex; align-items: center; color: #fff; }
  .en { width: 29px; font-size: 11.5px; letter-spacing: -.3px; margin-bottom: 4px; }
  .clock { width: 78px; padding-left: 5px; display: flex; flex-direction: column; align-items: center; line-height: 17px; font-size: 12px; letter-spacing: -.4px; white-space: pre; }
  .show { width: 14px; height: 39px; border: 1px solid #b38d99; border-right: 0; background: linear-gradient(140deg, #bd95a2, #76404f 40%, #511e2c 60%); }
</style>
